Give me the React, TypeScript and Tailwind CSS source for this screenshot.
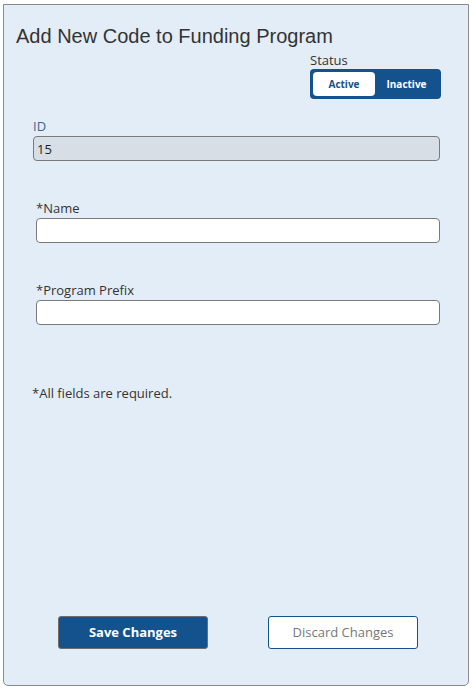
import React, { useState } from 'react';

const labelFont = { fontFamily: '"Open Sans", "Noto Sans", sans-serif' };

function Field({ label, value, readOnly, labelClass }: { label: string; value?: string; readOnly?: boolean; labelClass?: string }) {
  return (
    <div className="flex flex-col">
      <label className={`text-[13px] leading-[16px] ${labelClass ?? 'text-[#333333]'}`}>{label}</label>
      <input
        readOnly={readOnly}
        defaultValue={value}
        className={`mt-[2px] h-[25px] rounded-[4px] border border-[#7a7a7a] px-[3px] text-[13px] text-[#222] outline-none ${
          readOnly ? 'bg-[#d8dee5]' : 'bg-white'
        }`}
      />
    </div>
  );
}

export default function App() {
  const [active, setActive] = useState(true);

  return (
    <div className="h-[689px] w-[473px] bg-white pl-[3px] pr-[4px] pt-[4px] pb-[3px]" style={labelFont}>
      <div className="flex h-full flex-col rounded-b-[5px] border border-[#8a8a8a] bg-[#e3edf8]">
        <h1
          className="ml-[12px] mt-[19px] text-[20px] leading-[24px] text-[#333333]"
          style={{ fontFamily: '"Liberation Sans", Arial, sans-serif' }}
        >
          Add New Code to Funding Program
        </h1>

        <div className="mr-[27px] mt-[5px] flex flex-col items-start self-end">
          <span className="text-[13px] leading-[15px] text-[#333333]">Status</span>
          <div className="mt-[1px] flex h-[30px] w-[131px] items-center rounded-[4px] bg-[#13528c] p-[3px]">
            <button
              onClick={() => setActive(true)}
              className={`flex h-[24px] w-[62px] items-center justify-center rounded-[4px] text-[10px] font-bold ${
                active ? 'bg-white text-[#13528c]' : 'text-white'
              }`}
            >
              Active
            </button>
            <button
              onClick={() => setActive(false)}
              className={`flex h-[24px] flex-1 items-center justify-center rounded-[4px] text-[10px] font-bold ${
                !active ? 'bg-white text-[#13528c]' : 'text-white'
              }`}
            >
              Inactive
            </button>
          </div>
        </div>

        <div className="ml-[29px] mr-[28px] mt-[19px]">
          <Field label="ID" value="15" readOnly labelClass="text-[#3a6591]" />
        </div>

        <div className="ml-[32px] mr-[28px] mt-[39px]">
          <Field label="*Name" />
        </div>

        <div className="ml-[32px] mr-[28px] mt-[39px]">
          <Field label="*Program Prefix" />
        </div>

        <p className="ml-[28px] mt-[60px] text-[13px] leading-[16px] text-[#333333]">*All fields are required.</p>

        <div className="flex-1" />

        <div className="mb-[36px] flex pl-[54px]">
          <button className="h-[33px] w-[150px] rounded-[3px] border border-[#6d6d6d] bg-[#13528c] text-[13px] font-bold text-white">
            Save Changes
          </button>
          <button className="ml-[60px] h-[33px] w-[150px] rounded-[3px] border border-[#13528c] bg-white text-[13px] text-[#777777]">
            Discard Changes
          </button>
        </div>
      </div>
    </div>
  );
}
